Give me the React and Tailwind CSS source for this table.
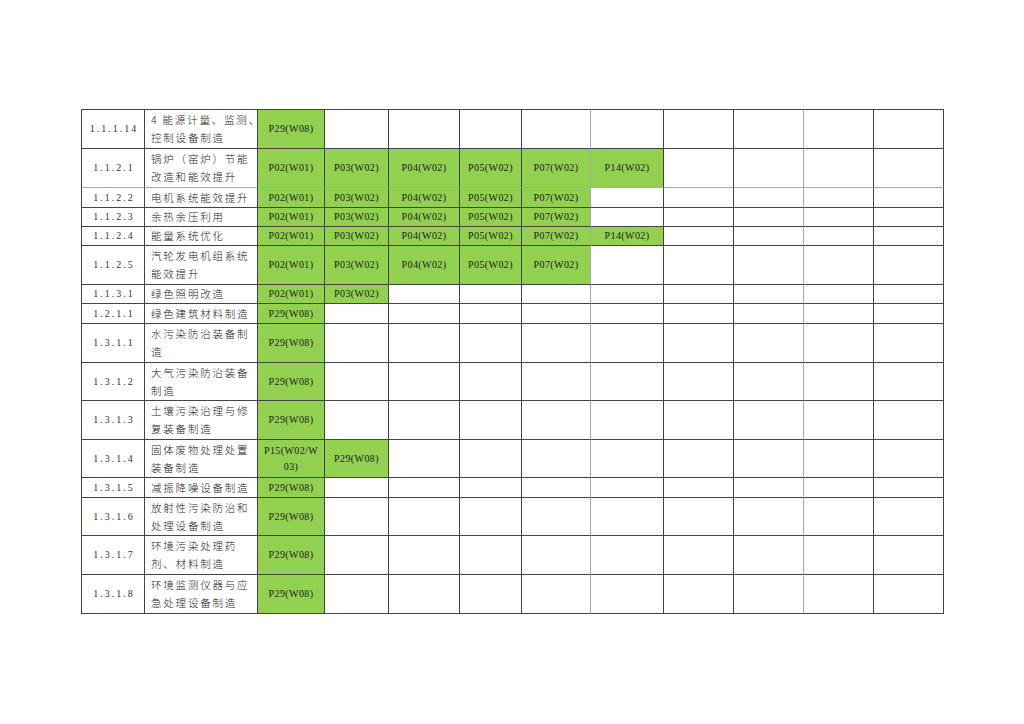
import React from 'react'

const COLS = ['w-[64px]', 'w-[113px]', 'w-[67px]', 'w-[64px]', 'w-[71px]', 'w-[62px]', 'w-[69px]', 'w-[73px]', 'w-[70px]', 'w-[70px]', 'w-[70px]', 'w-[70px]']

const A = 'P02(W01)', B = 'P03(W02)', C = 'P04(W02)', D = 'P05(W02)', E = 'P07(W02)', F = 'P14(W02)', G = 'P29(W08)'

const ROWS = [
  { code: '1.1.1.14', name: ['4 能源计量、监测、', '控制设备制造'], cells: [G], h: 'h-[40px]' },
  { code: '1.1.2.1', name: ['锅炉（窑炉）节能', '改造和能效提升'], cells: [A, B, C, D, E, F], h: 'h-[39px]' },
  { code: '1.1.2.2', name: ['电机系统能效提升'], cells: [A, B, C, D, E], h: 'h-[20px]' },
  { code: '1.1.2.3', name: ['余热余压利用'], cells: [A, B, C, D, E], h: 'h-[19px]' },
  { code: '1.1.2.4', name: ['能量系统优化'], cells: [A, B, C, D, E, F], h: 'h-[19px]' },
  { code: '1.1.2.5', name: ['汽轮发电机组系统', '能效提升'], cells: [A, B, C, D, E], h: 'h-[39px]' },
  { code: '1.1.3.1', name: ['绿色照明改造'], cells: [A, B], h: 'h-[19px]' },
  { code: '1.2.1.1', name: ['绿色建筑材料制造'], cells: [G], h: 'h-[20px]' },
  { code: '1.3.1.1', name: ['水污染防治装备制', '造'], cells: [G], h: 'h-[39px]' },
  { code: '1.3.1.2', name: ['大气污染防治装备', '制造'], cells: [G], h: 'h-[38px]' },
  { code: '1.3.1.3', name: ['土壤污染治理与修', '复装备制造'], cells: [G], h: 'h-[39px]' },
  { code: '1.3.1.4', name: ['固体废物处理处置', '装备制造'], cells: [['P15(W02/W', '03)'], G], h: 'h-[38px]' },
  { code: '1.3.1.5', name: ['减振降噪设备制造'], cells: [G], h: 'h-[20px]' },
  { code: '1.3.1.6', name: ['放射性污染防治和', '处理设备制造'], cells: [G], h: 'h-[38px]' },
  { code: '1.3.1.7', name: ['环境污染处理药', '剂、材料制造'], cells: [G], h: 'h-[39px]' },
  { code: '1.3.1.8', name: ['环境监测仪器与应', '急处理设备制造'], cells: [G], h: 'h-[39px]' },
]

// grid lines in the scan are not all the same grey
function cellBorder(ri, ci) {
  let c = 'border-r border-b '
  c += ci === 6 || ci === 9 ? 'border-r-[#a8a8a8] ' : 'border-r-[#444] '
  c += ri === 1 ? 'border-b-[#a8a8a8] ' : 'border-b-[#444] '
  if (ci === 0) c += 'border-l border-l-[#444] '
  if (ri === 0) c += 'border-t border-t-[#444] '
  return c
}

function Lines({ lines }) {
  return lines.map((l, i) => (
    <div key={i} className="whitespace-nowrap">{l}</div>
  ))
}

export default function App() {
  return (
    <div className="w-[1024px] h-[724px] bg-white overflow-hidden pt-[109px] pl-[81px]">
      <table className="border-separate border-spacing-0 table-fixed w-[863px] text-[#222]">
        <colgroup>
          {COLS.map((w, i) => <col key={i} className={w} />)}
        </colgroup>
        <tbody>
          {ROWS.map((r, ri) => (
            <tr key={r.code} className={r.h}>
              <td className={cellBorder(ri, 0) + "p-0 pl-[2px] text-center align-middle text-[10px] leading-[14px] tracking-[2px] text-[#333] font-['Liberation_Serif',serif]"}>
                {r.code}
              </td>
              <td className={cellBorder(ri, 1) + "p-0 pl-[6px] align-middle text-[10.5px] leading-[18px] tracking-[1.8px] font-light font-['Noto_Sans_CJK_SC',sans-serif]"}>
                <Lines lines={r.name} />
              </td>
              {Array.from({ length: 10 }).map((_, k) => {
                const v = r.cells[k]
                return (
                  <td
                    key={k}
                    className={cellBorder(ri, k + 2) + "p-0 text-center align-middle text-[10px] leading-[16px] tracking-[0.4px] text-[#1c1c1c] font-['Liberation_Serif',serif] " + (v ? 'bg-[#92d050]' : 'bg-white')}
                  >
                    {v ? (Array.isArray(v) ? <Lines lines={v} /> : v) : null}
                  </td>
                )
              })}
            </tr>
          ))}
        </tbody>
      </table>
    </div>
  )
}
